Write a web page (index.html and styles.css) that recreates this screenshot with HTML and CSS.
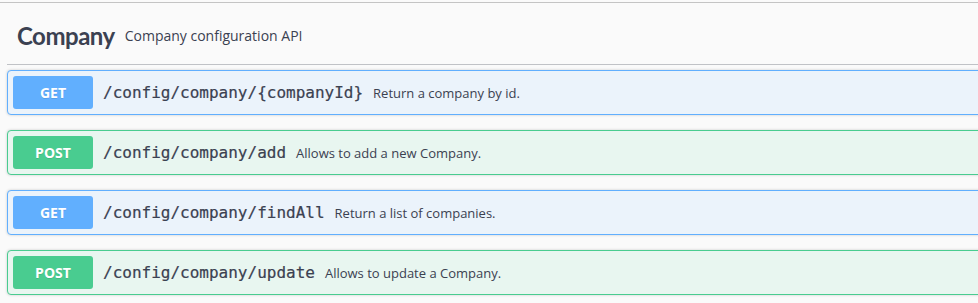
FILE: index.html
```html
<!DOCTYPE html>
<html>
<head>
<meta charset="utf-8">
<link rel="stylesheet" href="styles.css">
</head>
<body>
<div class="page">
  <div class="tag-section">
    <h3 class="tag-title">
      <span class="tag-name">Company</span>
      <small class="tag-desc">Company configuration API</small>
    </h3>
    <div class="op op-get">
      <span class="method">GET</span>
      <span class="path">/config/company/{companyId}</span>
      <span class="summary">Return a company by id.</span>
    </div>
    <div class="op op-post">
      <span class="method">POST</span>
      <span class="path">/config/company/add</span>
      <span class="summary">Allows to add a new Company.</span>
    </div>
    <div class="op op-get">
      <span class="method">GET</span>
      <span class="path">/config/company/findAll</span>
      <span class="summary">Return a list of companies.</span>
    </div>
    <div class="op op-post">
      <span class="method">POST</span>
      <span class="path">/config/company/update</span>
      <span class="summary">Allows to update a Company.</span>
    </div>
  </div>
</div>
</body>
</html>
```

FILE: styles.css
```css
html, body {
  margin: 0;
  padding: 0;
  background: #fafafa;
  overflow: hidden;
}
.page {
  width: 1000px;
  border-top: 1px solid #c4c4c4;
  margin-top: 2px;
  font-family: "Open Sans", sans-serif;
  color: #3b4151;
}
.tag-section {
  padding-left: 7px;
}
.tag-title {
  display: flex;
  align-items: center;
  height: 62px;
  margin: 0 0 5px 0;
  padding: 4px 0 0 10px;
  border-bottom: 1px solid rgba(59, 65, 81, 0.3);
  box-sizing: border-box;
  font-weight: normal;
}
.tag-name {
  font-family: "Lato", sans-serif;
  font-weight: 700;
  font-size: 24px;
  letter-spacing: -0.5px;
  color: #3b4151;
}
.tag-desc {
  font-size: 14px;
  padding-left: 10px;
  color: #3b4151;
}
.op {
  display: flex;
  align-items: center;
  height: 45px;
  box-sizing: border-box;
  padding: 0 5px;
  margin-bottom: 15px;
  border: 1px solid;
  border-radius: 4px;
  box-shadow: 0 0 3px rgba(0, 0, 0, 0.19);
}
.op-get {
  background: #ebf3fb;
  border-color: #61affe;
}
.op-post {
  background: #e8f6f0;
  border-color: #49cc90;
}
.method {
  width: 80px;
  height: 33px;
  display: flex;
  align-items: center;
  justify-content: center;
  border-radius: 3px;
  color: #fff;
  font-weight: 700;
  font-size: 14px;
  text-shadow: 0 1px 0 rgba(0, 0, 0, 0.1);
}
.op-get .method { background: #61affe; }
.op-post .method { background: #49cc90; }
.path {
  font-family: "DejaVu Sans Mono", monospace;
  font-size: 16px;
  font-weight: normal;
  -webkit-text-stroke: 0.2px #3b4151;
  padding: 0 10px;
  color: #3b4151;
}
.summary {
  font-size: 13px;
  color: #3b4151;
}
```
